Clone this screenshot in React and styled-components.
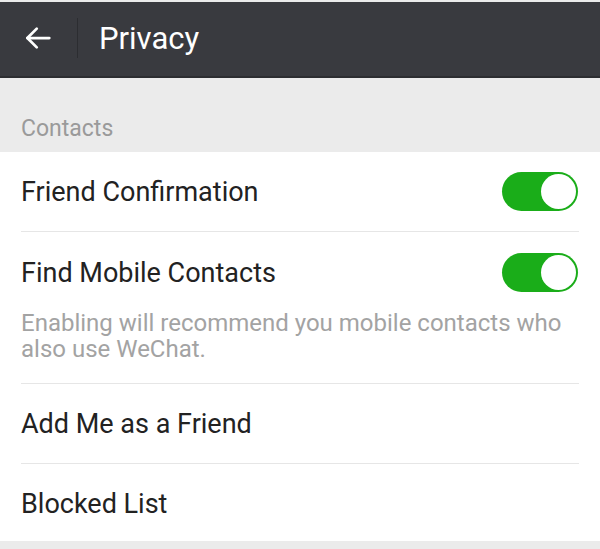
import React from 'react';
import styled, { createGlobalStyle } from 'styled-components';

const GlobalStyle = createGlobalStyle`
    html, body {
        margin: 0;
        padding: 0;
        background: #ebebeb;
        font-family: Roboto, "Noto Sans", sans-serif;
    }
`;

const Page = styled.div`
    width: 600px;
    height: 549px;
    overflow: hidden;
    background: #ebebeb;
    padding-top: 2px;
    box-sizing: border-box;
`;

const Header = styled.div`
    height: 74px;
    background: #393a3f;
    display: flex;
    align-items: center;
    border-bottom: 2px solid #2c2d31;
`;

const BackButton = styled.div`
    width: 77px;
    height: 100%;
    display: flex;
    align-items: center;
    justify-content: center;
    padding-right: 2px;
    box-sizing: border-box;
    svg {
        width: 30px;
        height: 30px;
        margin-top: -3px;
    }
`;

const Divider = styled.div`
    width: 1px;
    height: 40px;
    margin-top: -2px;
    background: #2c2d31;
`;

const Title = styled.div`
    color: #ffffff;
    font-size: 31px;
    margin-left: 21px;
    margin-top: -1px;
`;

const SectionLabel = styled.div`
    height: 74px;
    padding: 0 21px 10px;
    box-sizing: border-box;
    display: flex;
    align-items: flex-end;
    color: #9a9a9a;
    font-size: 23px;
`;

const List = styled.div`
    background: #ffffff;
    padding: 0 21px;
    height: 389px;
`;

const Row = styled.div`
    display: flex;
    flex-direction: column;
    justify-content: center;
    border-bottom: ${props => (props.last ? 'none' : '1px solid #e6e6e6')};
    padding: ${props => (props.tall ? '20px 0 21px' : '0')};
    height: ${props => (props.tall ? 'auto' : '79px')};
    box-sizing: content-box;
`;

const RowMain = styled.div`
    display: flex;
    align-items: center;
    justify-content: space-between;
    height: 40px;
`;

const Label = styled.span`
    color: #222222;
    font-size: 27px;
    margin-top: 1px;
`;

const Note = styled.div`
    color: #a3a3a3;
    font-size: 24px;
    line-height: 26px;
    margin-top: 18px;
    padding-right: 12px;
`;

const Switch = styled.div`
    width: 76px;
    height: 39px;
    border-radius: 20px;
    background: #1aad19;
    display: flex;
    justify-content: flex-end;
    align-items: center;
    padding: 2px;
    box-sizing: border-box;
    margin-right: 1px;
`;

const Knob = styled.div`
    width: 35px;
    height: 35px;
    border-radius: 50%;
    background: #ffffff;
`;

const Toggle = () => (
    <Switch>
        <Knob />
    </Switch>
);

const App = () => {
    return (
        <Page>
            <GlobalStyle />
            <Header>
                <BackButton>
                    <svg viewBox="0 0 24 24" fill="none" stroke="#ffffff" strokeWidth="2.2" strokeLinecap="round" strokeLinejoin="round">
                        <path d="M21 12H3.5" />
                        <path d="M11 4.5L3.5 12L11 19.5" />
                    </svg>
                </BackButton>
                <Divider />
                <Title>Privacy</Title>
            </Header>
            <SectionLabel>Contacts</SectionLabel>
            <List>
                <Row>
                    <RowMain>
                        <Label>Friend Confirmation</Label>
                        <Toggle />
                    </RowMain>
                </Row>
                <Row tall>
                    <RowMain>
                        <Label>Find Mobile Contacts</Label>
                        <Toggle />
                    </RowMain>
                    <Note>
                        Enabling will recommend you mobile contacts who also use WeChat.
                    </Note>
                </Row>
                <Row>
                    <Label>Add Me as a Friend</Label>
                </Row>
                <Row last>
                    <Label>Blocked List</Label>
                </Row>
            </List>
        </Page>
    );
};

export default App;
